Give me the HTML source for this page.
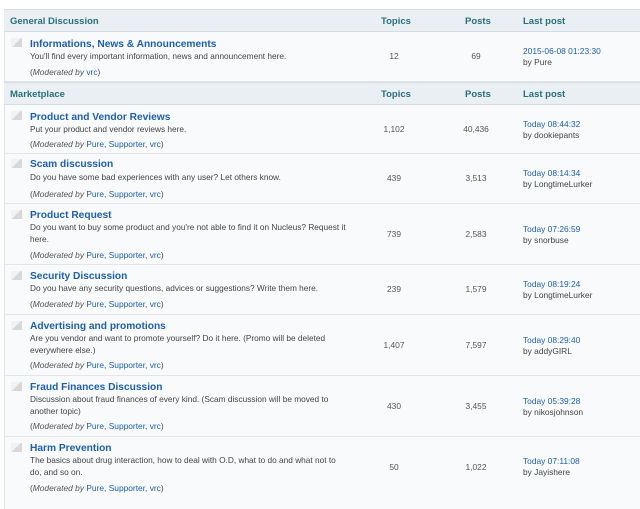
<!DOCTYPE html>
<html><head><meta charset="utf-8"><style>
*{margin:0;padding:0;box-sizing:border-box}
body{width:640px;height:496px;overflow:hidden;background:#fff;font-family:"Liberation Sans",Arial,sans-serif;position:relative}
.wrap{position:absolute;left:4px;top:9px;width:650px;height:500px;border-left:1px solid #dde5ea;border-top:1px solid #d3dde3;background:#f9fafc}
.hd{position:absolute;left:4px;width:650px;background:#e9eff3;border-bottom:1px solid #d3dde3;border-top:1px solid #d3dde3;color:#2a6f7f;font-weight:bold;font-size:9.5px}
.hd span{position:absolute;top:6px}
.row{position:absolute;left:4px;width:650px;border-bottom:1px solid #e1e7eb}
.ic{position:absolute;left:7px;width:11px;height:9px;background:linear-gradient(135deg,#f2f2f2 50%,#d8d8d8 50%)}
.t{position:absolute;left:26px;font-size:10.2px;font-weight:bold;color:#1c5fae;margin-top:1px}
.d{position:absolute;left:26px;font-size:8.3px;color:#444;line-height:12px;width:320px}
.m{position:absolute;left:26px;font-size:8.4px;color:#444;margin-top:1px}
.m i{color:#555}.m a,.lp a{color:#1c5fae;text-decoration:none}
.n{position:absolute;font-size:8.4px;color:#555;text-align:center;width:60px}
.lp{position:absolute;left:519px;font-size:8.4px;color:#444;line-height:11px}
</style></head><body>
<div class="wrap"></div>
<div class="hd" style="top:9px;height:23px"><span style="left:6px">General Discussion</span><span style="left:377px">Topics</span><span style="left:461px">Posts</span><span style="left:519px">Last post</span></div>
<div class="row" style="top:32px;height:50px"><div class="ic" style="top:6px"></div><div class="t" style="top:6px">Informations, News &amp; Announcements</div><div class="d" style="top:18px">You'll find every important information, news and announcement here.</div><div class="m" style="top:34px">(<i>Moderated by</i> <a>vrc</a>)</div><div class="n" style="left:360px;top:19px">12</div><div class="n" style="left:442px;top:19px">69</div><div class="lp" style="top:14px"><a>2015-06-08 01:23:30</a><br>by Pure</div></div>
<div class="hd" style="top:82px;height:23px"><span style="left:6px">Marketplace</span><span style="left:377px">Topics</span><span style="left:461px">Posts</span><span style="left:519px">Last post</span></div>

<div class="row" style="top:105px;height:49px"><div class="ic" style="top:6px"></div><div class="t" style="top:6px">Product and Vendor Reviews</div><div class="d" style="top:18px">Put your product and vendor reviews here.</div><div class="m" style="top:33px">(<i>Moderated by</i> <a>Pure</a>, <a>Supporter</a>, <a>vrc</a>)</div><div class="n" style="left:360px;top:19px">1,102</div><div class="n" style="left:442px;top:19px">40,436</div><div class="lp" style="top:14px"><a>Today 08:44:32</a><br>by dookiepants</div></div>

<div class="row" style="top:154px;height:50px"><div class="ic" style="top:5px"></div><div class="t" style="top:4px">Scam discussion</div><div class="d" style="top:17px">Do you have some bad experiences with any user? Let others know.</div><div class="m" style="top:34px">(<i>Moderated by</i> <a>Pure</a>, <a>Supporter</a>, <a>vrc</a>)</div><div class="n" style="left:360px;top:19px">439</div><div class="n" style="left:442px;top:19px">3,513</div><div class="lp" style="top:14px"><a>Today 08:14:34</a><br>by LongtimeLurker</div></div>

<div class="row" style="top:204px;height:61px"><div class="ic" style="top:6px"></div><div class="t" style="top:5px">Product Request</div><div class="d" style="top:17px">Do you want to buy some product and you're not able to find it on Nucleus? Request it here.</div><div class="m" style="top:45px">(<i>Moderated by</i> <a>Pure</a>, <a>Supporter</a>, <a>vrc</a>)</div><div class="n" style="left:360px;top:25px">739</div><div class="n" style="left:442px;top:25px">2,583</div><div class="lp" style="top:20px"><a>Today 07:26:59</a><br>by snorbuse</div></div>

<div class="row" style="top:265px;height:50px"><div class="ic" style="top:6px"></div><div class="t" style="top:5px">Security Discussion</div><div class="d" style="top:17px">Do you have any security questions, advices or suggestions? Write them here.</div><div class="m" style="top:33px">(<i>Moderated by</i> <a>Pure</a>, <a>Supporter</a>, <a>vrc</a>)</div><div class="n" style="left:360px;top:19px">239</div><div class="n" style="left:442px;top:19px">1,579</div><div class="lp" style="top:14px"><a>Today 08:19:24</a><br>by LongtimeLurker</div></div>

<div class="row" style="top:315px;height:61px"><div class="ic" style="top:6px"></div><div class="t" style="top:5px">Advertising and promotions</div><div class="d" style="top:17px">Are you vendor and want to promote yourself? Do it here. (Promo will be deleted everywhere else.)</div><div class="m" style="top:44px">(<i>Moderated by</i> <a>Pure</a>, <a>Supporter</a>, <a>vrc</a>)</div><div class="n" style="left:360px;top:25px">1,407</div><div class="n" style="left:442px;top:25px">7,597</div><div class="lp" style="top:20px"><a>Today 08:29:40</a><br>by addyGIRL</div></div>

<div class="row" style="top:376px;height:61px"><div class="ic" style="top:6px"></div><div class="t" style="top:5px">Fraud Finances Discussion</div><div class="d" style="top:17px">Discussion about fraud finances of every kind. (Scam discussion will be moved to another topic)</div><div class="m" style="top:44px">(<i>Moderated by</i> <a>Pure</a>, <a>Supporter</a>, <a>vrc</a>)</div><div class="n" style="left:360px;top:25px">430</div><div class="n" style="left:442px;top:25px">3,455</div><div class="lp" style="top:20px"><a>Today 05:39:28</a><br>by nikosjohnson</div></div>

<div class="row" style="top:437px;height:61px;border-bottom:none"><div class="ic" style="top:6px"></div><div class="t" style="top:5px">Harm Prevention</div><div class="d" style="top:17px">The basics about drug interaction, how to deal with O.D, what to do and what not to<br>do, and so on.</div><div class="m" style="top:45px">(<i>Moderated by</i> <a>Pure</a>, <a>Supporter</a>, <a>vrc</a>)</div><div class="n" style="left:360px;top:25px">50</div><div class="n" style="left:442px;top:25px">1,022</div><div class="lp" style="top:19px"><a>Today 07:11:08</a><br>by Jayishere</div></div>
</body></html>
